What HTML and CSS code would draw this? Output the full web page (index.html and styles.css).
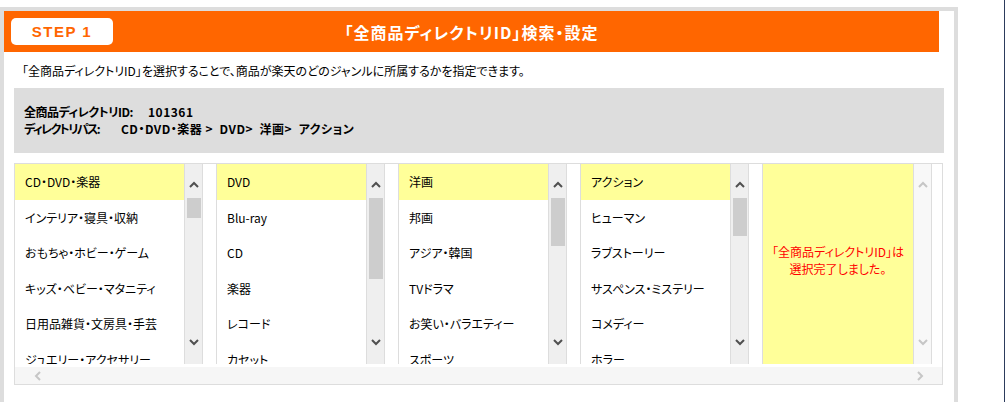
FILE: index.html
```html
<!DOCTYPE html>
<html lang="ja">
<head>
    <meta charset="UTF-8">
    <title>全商品ディレクトリID 検索・設定</title>
    <link rel="stylesheet" href="styles.css">
</head>
<body>
    <div class="page">
        <div class="frame">
            <div class="step-head">
                <span class="step-badge">STEP 1</span>
                <h2 class="step-title">「全商品ディレクトリID」検索・設定</h2>
                <span></span>
            </div>

            <p class="lead">「全商品ディレクトリID」を選択することで、商品が楽天のどのジャンルに所属するかを指定できます。</p>

            <div class="current">
                <div><span class="label id-label">全商品ディレクトリID:</span><span class="val">101361</span></div>
                <div><span class="label path-label">ディレクトリパス:</span><span class="val">CD・DVD・楽器&nbsp;&gt;&nbsp; DVD&gt;&nbsp; 洋画&gt;&nbsp; アクション</span></div>
            </div>

            <div class="picker">
                <div class="cols">
                    <div class="col first">
                        <ul class="opts">
                            <li class="sel">CD・DVD・楽器</li>
                            <li>インテリア・寝具・収納</li>
                            <li>おもちゃ・ホビー・ゲーム</li>
                            <li>キッズ・ベビー・マタニティ</li>
                            <li>日用品雑貨・文房具・手芸</li>
                            <li>ジュエリー・アクセサリー</li>
                        </ul>
                        <div class="vbar">
                            <div class="btn up"><svg width="10" height="7" viewBox="0 0 10 7"><polyline points="1,6 5,2 9,6" /></svg></div>
                            <div class="track"><div class="thumb" style="height: 20px"></div></div>
                            <div class="btn down"><svg width="10" height="7" viewBox="0 0 10 7"><polyline points="1,1 5,5 9,1" /></svg></div>
                        </div>
                    </div>
                    <div class="col">
                        <ul class="opts">
                            <li class="sel">DVD</li>
                            <li>Blu-ray</li>
                            <li>CD</li>
                            <li>楽器</li>
                            <li>レコード</li>
                            <li>カセット</li>
                        </ul>
                        <div class="vbar">
                            <div class="btn up"><svg width="10" height="7" viewBox="0 0 10 7"><polyline points="1,6 5,2 9,6" /></svg></div>
                            <div class="track"><div class="thumb" style="height: 81px"></div></div>
                            <div class="btn down"><svg width="10" height="7" viewBox="0 0 10 7"><polyline points="1,1 5,5 9,1" /></svg></div>
                        </div>
                    </div>
                    <div class="col">
                        <ul class="opts">
                            <li class="sel">洋画</li>
                            <li>邦画</li>
                            <li>アジア・韓国</li>
                            <li>TVドラマ</li>
                            <li>お笑い・バラエティー</li>
                            <li>スポーツ</li>
                        </ul>
                        <div class="vbar">
                            <div class="btn up"><svg width="10" height="7" viewBox="0 0 10 7"><polyline points="1,6 5,2 9,6" /></svg></div>
                            <div class="track"><div class="thumb" style="height: 48px"></div></div>
                            <div class="btn down"><svg width="10" height="7" viewBox="0 0 10 7"><polyline points="1,1 5,5 9,1" /></svg></div>
                        </div>
                    </div>
                    <div class="col">
                        <ul class="opts">
                            <li class="sel">アクション</li>
                            <li>ヒューマン</li>
                            <li>ラブストーリー</li>
                            <li>サスペンス・ミステリー</li>
                            <li>コメディー</li>
                            <li>ホラー</li>
                        </ul>
                        <div class="vbar">
                            <div class="btn up"><svg width="10" height="7" viewBox="0 0 10 7"><polyline points="1,6 5,2 9,6" /></svg></div>
                            <div class="track"><div class="thumb" style="height: 38px"></div></div>
                            <div class="btn down"><svg width="10" height="7" viewBox="0 0 10 7"><polyline points="1,1 5,5 9,1" /></svg></div>
                        </div>
                    </div>
                    <div class="col done">
                        <div class="done-msg">「全商品ディレクトリID」は<br>選択完了しました。</div>
                        <div class="vbar off">
                            <div class="btn up"><svg width="10" height="7" viewBox="0 0 10 7"><polyline points="1,6 5,2 9,6" /></svg></div>
                            <div class="track"></div>
                            <div class="btn down"><svg width="10" height="7" viewBox="0 0 10 7"><polyline points="1,1 5,5 9,1" /></svg></div>
                        </div>
                    </div>
                </div>
                <div class="hbar">
                    <svg width="7" height="10" viewBox="0 0 7 10"><polyline points="6,1 2,5 6,9" /></svg>
                    <svg width="7" height="10" viewBox="0 0 7 10"><polyline points="1,1 5,5 1,9" /></svg>
                </div>
            </div>
        </div>
        <div class="edge"></div>
    </div>
</body>
</html>
```

FILE: styles.css
```css
body {
    margin: 0;
    font-family: "Noto Sans CJK JP", sans-serif;
    font-size: 12px;
    color: #000;
    background: #fff;
}
.page {
    display: flex;
    height: 402px;
    overflow: hidden;
}
.frame {
    width: 950px;
    margin-top: 7px;
    border: 4px solid #dddddd;
    border-bottom: none;
    font-feature-settings: "palt";
}
.edge {
    width: 1px;
    margin-left: auto;
    background: #2c3b5c;
}

/* step header */
.step-head {
    display: grid;
    grid-template-columns: 1fr auto 1fr;
    align-items: center;
    width: 935px;
    height: 41px;
    background-color: #ff6600;
}
.step-badge {
    justify-self: start;
    width: 102px;
    height: 27px;
    margin-left: 7px;
    line-height: 27px;
    text-align: center;
    background: #fff;
    border-radius: 5px;
    color: #ff6600;
    font-family: "Liberation Sans", Arial, sans-serif;
    font-size: 15px;
    font-weight: bold;
    letter-spacing: 1.5px;
}
.step-title {
    margin: 0;
    color: #fff;
    font-size: 16px;
    font-weight: bold;
    letter-spacing: 1px;
}

.lead {
    margin: 10px 0 8px 18px;
    line-height: 18px;
}

.current {
    width: 910px;
    margin-left: 10px;
    padding: 15px 10px 16px;
    background: #dddddd;
    font-weight: bold;
    line-height: 17px;
}
.current .label {
    display: inline-block;
    white-space: nowrap;
}
.current .id-label {
    width: 124px;
    letter-spacing: -0.5px;
}
.current .path-label {
    width: 97px;
    letter-spacing: -1.6px;
}
.current .val {
    letter-spacing: 0.5px;
}

/* list picker */
.picker {
    width: 927px;
    margin: 10px 0 0 10px;
    border: 1px solid #dddddd;
}
.cols {
    display: flex;
    gap: 13px;
    height: 200px;
}
.col {
    display: flex;
    width: 167px;
    border-left: 1px solid #dddddd;
    border-right: 1px solid #dddddd;
}
.col.first {
    width: 187px;
    border-left: none;
}
.col.done {
    width: 168px;
}
.opts {
    flex: 1;
    margin: 0;
    padding: 0;
    list-style: none;
    overflow: hidden;
}
.opts li {
    height: 35.6px;
    line-height: 35.6px;
    padding-left: 10px;
    white-space: nowrap;
}
.opts li.sel {
    background: #ffff99;
}
.done-msg {
    flex: 1;
    display: flex;
    align-items: center;
    justify-content: center;
    padding-bottom: 8px;
    background: #ffff99;
    color: #ff0000;
    text-align: center;
    line-height: 17px;
}

.vbar {
    display: flex;
    flex-direction: column;
    width: 17px;
    border-left: 1px solid #dddddd;
    background: #efefef;
}
.vbar .btn {
    display: flex;
    justify-content: center;
}
.vbar .up {
    align-items: flex-end;
    padding-bottom: 10px;
    height: 24px;
}
.vbar .down {
    align-items: flex-start;
    padding-top: 9px;
    height: 25px;
}
.vbar .track {
    flex: 1;
}
.vbar .thumb {
    margin: 0 1px 0 2px;
    background: #cdcdcd;
}
.vbar svg polyline,
.hbar svg polyline {
    fill: none;
    stroke: #505050;
    stroke-width: 2;
}
.vbar.off {
    background: #f8f8f8;
}
.vbar.off svg polyline {
    stroke: #c6c6c6;
}

.hbar {
    display: flex;
    justify-content: space-between;
    align-items: center;
    height: 17px;
    margin-top: 3px;
    padding: 0 18px 0 19px;
    background: #f6f6f6;
}
.hbar svg polyline {
    stroke: #c6c6c6;
}
```
